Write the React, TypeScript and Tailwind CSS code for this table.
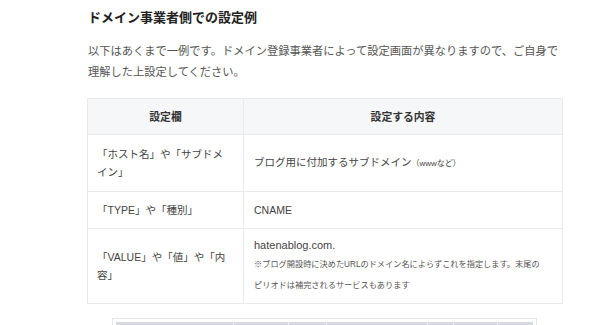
const font = {
  fontFamily: '"Liberation Sans", "Noto Sans CJK JP", sans-serif',
};

const rows: { label: string; content: React.ReactNode; h: string }[] = [
  {
    label: "「ホスト名」や「サブドメイン」",
    content: (
      <>
        ブログ用に付加するサブドメイン
        <span className="text-[8px]">（wwwなど）</span>
      </>
    ),
    h: "h-[57px]",
  },
  { label: "「TYPE」や「種別」", content: "CNAME", h: "h-[37px]" },
  {
    label: "「VALUE」や「値」や「内容」",
    content: (
      <>
        <div className="text-[11px] leading-[18px]">hatenablog.com.</div>
        <div className="text-[8.2px] leading-[21px] text-[#555]">
          ※ブログ開設時に決めたURLのドメイン名によらずこれを指定します。末尾のピリオドは補完されるサービスもあります
        </div>
      </>
    ),
    h: "h-[75px]",
  },
];

export default function App() {
  return (
    <div className="h-[325px] w-[600px] overflow-hidden bg-white" style={font}>
      <div className="ml-[87px] w-[476px]">
        <h2 className="pt-[8px] pl-px text-[13px] font-bold leading-[20px] text-[#222]">
          ドメイン事業者側での設定例
        </h2>
        <p className="mt-[13px] pl-px text-[11.25px] leading-[21px] text-[#555]">
          以下はあくまで一例です。ドメイン登録事業者によって設定画面が異なりますので、ご自身で理解した上設定してください。
        </p>
        <table className="mt-[15px] w-[476px] border-collapse text-[10.5px] leading-[18px] text-[#444]">
          <thead>
            <tr className="h-[36px] bg-[#f6f7f9]">
              <th className="w-[156px] border border-[#e8eaed] text-[10.8px] font-bold text-[#333]">設定欄</th>
              <th className="border border-[#e8eaed] text-[10.8px] font-bold text-[#333]">設定する内容</th>
            </tr>
          </thead>
          <tbody>
            {rows.map((r) => (
              <tr key={r.label} className={r.h}>
                <td className="border border-[#e8eaed] pl-[9px] pr-[16px] align-middle">{r.label}</td>
                <td className="border border-[#e8eaed] pl-[10px] pr-[18px] align-middle">{r.content}</td>
              </tr>
            ))}
          </tbody>
        </table>
      </div>
      <div className="ml-[112px] mt-[14px] w-[425px] border border-[#e6e6e6] p-[3px]">
        <div className="flex h-[20px] bg-[#d6d9dd]">
          <div className="w-[118px] border-r border-[#eef0f2]" />
          <div className="w-[55px] border-r border-[#eef0f2]" />
          <div className="w-[38px] border-r border-[#eef0f2]" />
          <div className="w-[101px] border-r border-[#eef0f2]" />
          <div className="w-[26px] border-r border-[#eef0f2]" />
          <div className="w-[44px] border-r border-[#eef0f2]" />
          <div className="flex-1" />
        </div>
      </div>
    </div>
  );
}
